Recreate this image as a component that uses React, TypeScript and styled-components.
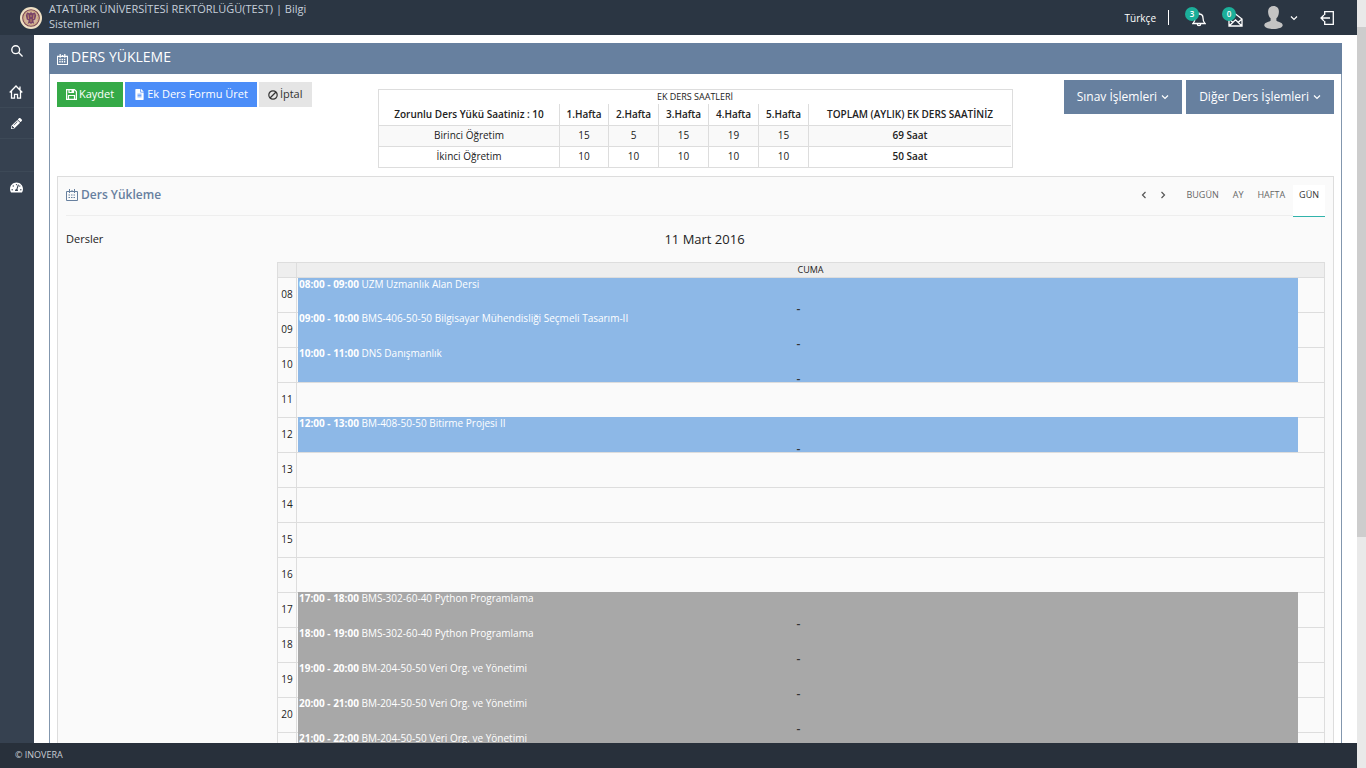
import React from "react";
import styled, { createGlobalStyle } from "styled-components";
import { FaFileAlt, FaPencilAlt, FaTachometerAlt } from "react-icons/fa";

const GlobalStyle = createGlobalStyle`
  *, *::before, *::after { box-sizing: border-box; }
  body {
    margin: 0;
    background: #fff;
    color: #222;
    font-family: "Open Sans", "Noto Sans", sans-serif;
    font-size: 10px;
  }
  button { font-family: inherit; border: 0; margin: 0; padding: 0; background: none; cursor: pointer; }
  a { color: inherit; text-decoration: none; }
  svg { display: block; flex: none; }
`;

const Window = styled.div`
  display: flex;
  height: 100vh;
  overflow: hidden;
`;

const Page = styled.div`
  flex: 1;
  min-width: 0;
  display: flex;
  flex-direction: column;
`;

const ScrollTrack = styled.div`
  width: 9px;
  padding-top: 27px;
  background: #e9e9e9;
`;

const ScrollThumb = styled.div`
  height: 510px;
  background: #cdcdcd;
`;

const TopBar = styled.header`
  flex: none;
  height: 35px;
  display: flex;
  align-items: center;
  justify-content: space-between;
  padding: 0 23px 0 20px;
  background: #2b3643;
`;

const Brand = styled.a`
  display: flex;
  align-items: center;
  gap: 7px;
`;

const BrandName = styled.span`
  width: 270px;
  padding-bottom: 4px;
  color: #c6cfda;
  font-size: 11px;
  line-height: 15px;
`;

const TopTools = styled.nav`
  display: flex;
  align-items: center;
`;

const Language = styled.button`
  height: 15px;
  padding-right: 12px;
  border-right: 1px solid #fff;
  color: #fff;
  font-size: 10px;
  line-height: 14px;
`;

const Notice = styled.button`
  position: relative;
  margin-left: 18px;
  width: 19px;
  height: 19px;
  display: flex;
  align-items: flex-end;
  justify-content: flex-end;
`;

const Count = styled.span`
  position: absolute;
  left: -2px;
  top: -1px;
  width: 14px;
  height: 14px;
  border-radius: 50%;
  background: #1caf9a;
  color: #fff;
  font-size: 8px;
  font-weight: 600;
  line-height: 13px;
  text-align: center;
`;

const Account = styled.button`
  display: flex;
  align-items: center;
  gap: 7px;
  margin-left: 21px;
  color: #fff;
`;

const Exit = styled.a`
  margin-left: 22px;
`;

const Body = styled.div`
  flex: 1;
  min-height: 0;
  display: flex;
`;

const SideBar = styled.nav`
  flex: none;
  width: 34px;
  background: #364150;
`;

const SideLink = styled.a<{ $height: number; $line?: boolean }>`
  display: flex;
  align-items: center;
  justify-content: center;
  height: ${(p) => p.$height}px;
  padding-right: 2px;
  border-bottom: ${(p) => (p.$line ? "1px solid #3d4957" : "0")};
  color: #fff;
`;

const SideSearch = styled(SideLink)`
  margin-bottom: 10px;
  padding-right: 0;
`;

const Main = styled.main`
  flex: 1;
  min-width: 0;
  overflow: hidden;
  padding: 8px 15px 0;
`;

const Portlet = styled.section`
  background: #fff;
`;

const PortletTitle = styled.h1`
  display: flex;
  align-items: center;
  gap: 3px;
  height: 31px;
  margin: 0;
  padding: 0 8px 4px;
  background: #67809f;
  color: #fff;
  font-size: 14px;
  font-weight: 400;
  line-height: 20px;

  svg { margin-top: 6px; }
`;

const PortletBody = styled.div`
  padding: 6px 7px;
  border: 1px solid #8397ae;
  border-top: 0;
`;

const ActionRow = styled.div`
  display: grid;
  grid-template-columns: 1fr auto 1fr;
  align-items: start;
`;

const Actions = styled.div`
  display: flex;
  gap: 2px;
  padding-top: 2px;
`;

const tones = {
  green: { bg: "#35aa47", fg: "#fff" },
  blue: { bg: "#4b8df8", fg: "#fff" },
  plain: { bg: "#e5e5e5", fg: "#333" },
};

const ActionButton = styled.button<{ $tone: keyof typeof tones }>`
  display: flex;
  align-items: center;
  gap: 2px;
  height: 25px;
  padding: 0 9px 2px;
  background: ${(p) => tones[p.$tone].bg};
  color: ${(p) => tones[p.$tone].fg};
  font-size: 11px;
  line-height: 15px;

  svg { margin-top: 2px; }
`;

const MenuGroup = styled.div`
  display: flex;
  justify-content: flex-end;
  gap: 4px;
`;

const MenuButton = styled.button`
  display: flex;
  align-items: center;
  gap: 4px;
  height: 34px;
  padding: 0 13px;
  background: #67809f;
  color: #fff;
  font-size: 12px;
  line-height: 18px;
`;

const HoursBox = styled.div`
  margin-top: 9px;
  padding-right: 1px;
  border: 1px solid #ddd;
`;

const HoursTable = styled.table`
  border-collapse: separate;
  border-spacing: 0;
  table-layout: fixed;
  width: 632px;
  text-align: center;

  caption { font-size: 9px; line-height: 14px; }
  th, td {
    height: 21px;
    padding: 0 0 2px;
    font-size: 10px;
    line-height: 18px;
    font-weight: 400;
    border-left: 1px solid #ddd;
  }
  th:first-child { border-left: 0; }
  thead th { font-weight: 600; }
  tbody th, tbody td { border-top: 1px solid #ddd; }
  tbody tr:first-child { background: #f9f9f9; }
  td:last-child { font-weight: 600; }
`;

const CalendarBox = styled.section`
  margin-top: 8px;
  padding: 8px;
  border: 1px solid #ddd;
  background: #fafafa;
`;

const CalendarHead = styled.div`
  display: flex;
  justify-content: space-between;
  height: 31px;
  border-bottom: 1px solid #eee;
`;

const CalendarTitle = styled.h2`
  display: flex;
  align-items: center;
  gap: 3px;
  height: 20px;
  margin: 0;
  color: #67809f;
  font-size: 12px;
  font-weight: 600;
  line-height: 18px;
`;

const ViewTabs = styled.div`
  display: flex;
  gap: 2px;
  height: 32px;
`;

const ViewTab = styled.button<{ $active?: boolean }>`
  display: flex;
  justify-content: center;
  padding: 3px 6px 0;
  color: ${(p) => (p.$active ? "#333" : "#666")};
  background: ${(p) => (p.$active ? "#fff" : "transparent")};
  border-bottom: ${(p) => (p.$active ? "1px solid #31b3ab" : "0")};
  font-size: 9px;
  line-height: 14px;
`;

const Stepper = styled.div`
  display: flex;
  gap: 9px;
  padding: 5px 9px 0 0;

  button { width: 10px; height: 10px; color: #555; }
`;

const DateRow = styled.div`
  display: grid;
  grid-template-columns: 1fr auto 1fr;
  align-items: center;
  height: 46px;
`;

const LessonsLabel = styled.h3`
  margin: 0;
  font-size: 11px;
  font-weight: 400;
  line-height: 16px;
`;

const DateTitle = styled.h2`
  margin: 0;
  padding-left: 18px;
  font-size: 13px;
  font-weight: 400;
  line-height: 18px;
`;

const CalendarGrid = styled.div`
  margin-left: 211px;
`;

const DayTable = styled.table`
  width: 100%;
  border-collapse: separate;
  border-spacing: 0;
  table-layout: fixed;
  border: 1px solid #ddd;
  border-bottom: 0;

  th, td { padding: 0; font-weight: 400; vertical-align: top; }
  thead th { height: 14px; background: #eee; font-size: 9px; line-height: 13px; }
  th:first-child, thead td:first-child { border-right: 1px solid #ddd; }
  thead td { background: #eee; }
  tbody th, tbody td { height: 35px; border-top: 1px solid #ddd; }
  tbody th { padding-bottom: 2px; vertical-align: middle; font-size: 10px; line-height: 14px; }
`;

const Event = styled.a<{ $evening: boolean; $first: boolean }>`
  display: flex;
  flex-direction: column;
  justify-content: space-between;
  height: ${(p) => (p.$first ? 34 : 35)}px;
  margin: ${(p) => (p.$first ? 0 : -1)}px 26px 0 1px;
  padding-left: 1px;
  background: ${(p) => (p.$evening ? "#a8a8a8" : "#8db8e7")};
  color: #fff;
  font-size: 10px;
  line-height: 12px;
`;

const Dash = styled.span`
  height: 10px;
  color: #333;
  font-size: 12px;
  font-weight: 600;
  line-height: 14px;
  text-align: center;
`;

const Footer = styled.footer`
  flex: none;
  height: 25px;
  padding: 0 15px;
  background: #28303b;
  color: #c8ccd2;
  font-size: 9px;
  line-height: 24px;
`;

const CalendarIcon = ({ size, bold }: { size: number; bold?: boolean }) => (
  <svg width={size} height={size} viewBox="0 0 12 12" fill="none" stroke="currentColor" aria-hidden="true">
    <path d="M.5 2.500h11v9H.5zM3.500 0v4M8.500 0v4M6 1v2" strokeWidth={bold ? 1.3 : 1} />
    <path d="M2.500 6h7M2.500 8.500h7" strokeDasharray="1.500 1" strokeWidth={bold ? 1.5 : 1} />
  </svg>
);

const SaveIcon = () => (
  <svg width="11" height="11" viewBox="0 0 11 11" fill="none" stroke="currentColor" aria-hidden="true">
    <path d="M.6.600h7.800l2 2v7.800H.6zM2.500 10.500v-4h6v4M3 .5v3h4.500v-3" strokeWidth="1.200" />
    <path d="M5.500 1h1.500v2H5.500z" fill="currentColor" stroke="none" />
  </svg>
);

const BanIcon = () => (
  <svg width="10" height="10" viewBox="0 0 10 10" fill="none" stroke="currentColor" strokeWidth="1.200" aria-hidden="true">
    <circle cx="5" cy="5" r="4.200" />
    <path d="M2 8l6-6" />
  </svg>
);

const Chevron = ({ dir = "down" }: { dir?: "down" | "left" | "right" }) => {
  const d = { down: "M1 2.500l3 3 3-3", left: "M5.500 1l-3 3 3 3", right: "M2.500 1l3 3-3 3" }[dir];
  return (
    <svg width="8" height="8" viewBox="0 0 8 8" fill="none" stroke="currentColor" strokeWidth="1.200" aria-hidden="true">
      <path d={d} />
    </svg>
  );
};

const Emblem = () => (
  <svg width="22" height="22" viewBox="0 0 22 22" aria-hidden="true">
    <circle cx="11" cy="11" r="11" fill="#efe0c4" />
    <circle cx="11" cy="11" r="8.300" fill="#d3b49c" stroke="#7b4552" strokeWidth="1.100" />
    <circle cx="11" cy="11" r="6.900" fill="none" stroke="#c9a05c" strokeWidth=".9" strokeDasharray="1 1" />
    <path d="M11 4.500l1 1.700L15 5.500l1.200 3-1 4-1.900 1 .9 3.300-2-.8-1.200 1-1.200-1-2 .8.900-3.300-1.900-1-1-4 1.200-3 3 .7z" fill="#7a4468" />
    <path d="M8 7.500l.6 4.500M14 7.500l-.6 4.500M11 8v2M11 12v3" stroke="#cfa068" strokeWidth=".8" />
  </svg>
);

const HomeIcon = () => (
  <svg width="14" height="14" viewBox="0 0 14 14" fill="none" stroke="currentColor" strokeWidth="1.300" aria-hidden="true">
    <path d="M.7 7.500L7 1l6.300 6.500M2.500 6v7.200h3V9.300h3v3.900h3V6M11 1.500v3" />
  </svg>
);

const SearchIcon = () => (
  <svg width="12" height="12" viewBox="0 0 12 12" fill="none" stroke="currentColor" strokeWidth="1.400" aria-hidden="true">
    <circle cx="4.700" cy="4.700" r="3.900" />
    <path d="M7.600 7.600l4 3.900" />
  </svg>
);

const BellIcon = () => (
  <svg width="14" height="15" viewBox="0 0 14 15" fill="none" stroke="#fff" strokeWidth="1.300" aria-hidden="true">
    <path d="M1 11.500c2-1.800 2-3 2-5.500C3 3.500 4.500 2 7 2s4 1.500 4 4c0 2.500 0 3.700 2 5.500zM7 2V.5M5.300 12c0 2.200 3.400 2.200 3.400 0" />
  </svg>
);

const MailIcon = () => (
  <svg width="15" height="14" viewBox="0 0 15 14" fill="none" stroke="#fff" strokeWidth="1.300" aria-hidden="true">
    <path d="M1 6L7.500 1 14 6v7H1zM10.300 9.300L14 6M4.700 9.300L1 6M1.300 12.700L7.500 6.800l6.200 5.900" />
  </svg>
);

const PersonIcon = () => (
  <svg width="19" height="23" viewBox="0 0 19 23" fill="#c3c3c3" aria-hidden="true">
    <path d="M9.500 0c3.600 0 5.600 2.500 5.400 6-.1 2.900-1 5-2.500 6.300v2.500c.7 1 6.300 1.300 6.300 4.500 0 2.200-4.100 3.700-9.200 3.700S.3 21.500.3 19.300c0-3.200 5.600-3.500 6.300-4.500v-2.500C5.100 11 4.200 8.900 4.100 6 3.900 2.500 5.900 0 9.500 0z" />
  </svg>
);

const ExitIcon = () => (
  <svg width="14" height="14" viewBox="0 0 14 14" fill="none" stroke="#fff" strokeWidth="1.300" aria-hidden="true">
    <path d="M4.700 4V.7h8.600v12.600H4.700V10M10 7H1M4 4L1 7l3 3" />
  </svg>
);

const weeks = ["1.Hafta", "2.Hafta", "3.Hafta", "4.Hafta", "5.Hafta"];
const hourRows = [
  { name: "Birinci Öğretim", values: [15, 5, 15, 19, 15], total: "69 Saat" },
  { name: "İkinci Öğretim", values: [10, 10, 10, 10, 10], total: "50 Saat" },
];

const lessons: Record<string, { time: string; name: string }> = {
  "08": { time: "08:00 - 09:00", name: "UZM Uzmanlık Alan Dersi" },
  "09": { time: "09:00 - 10:00", name: "BMS-406-50-50 Bilgisayar Mühendisliği Seçmeli Tasarım-II" },
  "10": { time: "10:00 - 11:00", name: "DNS Danışmanlık" },
  "12": { time: "12:00 - 13:00", name: "BM-408-50-50 Bitirme Projesi II" },
  "17": { time: "17:00 - 18:00", name: "BMS-302-60-40 Python Programlama" },
  "18": { time: "18:00 - 19:00", name: "BMS-302-60-40 Python Programlama" },
  "19": { time: "19:00 - 20:00", name: "BM-204-50-50 Veri Org. ve Yönetimi" },
  "20": { time: "20:00 - 21:00", name: "BM-204-50-50 Veri Org. ve Yönetimi" },
  "21": { time: "21:00 - 22:00", name: "BM-204-50-50 Veri Org. ve Yönetimi" },
};
const hours = Array.from({ length: 14 }, (_, i) => String(i + 8).padStart(2, "0"));

export default function App() {
  return (
    <Window>
      <GlobalStyle />
      <Page>
        <TopBar>
          <Brand href="#">
            <Emblem />
            <BrandName>ATATÜRK ÜNİVERSİTESİ REKTÖRLÜĞÜ(TEST) | Bilgi Sistemleri</BrandName>
          </Brand>
          <TopTools>
            <Language>Türkçe</Language>
            <Notice aria-label="Bildirimler"><BellIcon /><Count>3</Count></Notice>
            <Notice aria-label="Mesajlar"><MailIcon /><Count>0</Count></Notice>
            <Account aria-label="Hesap"><PersonIcon /><Chevron /></Account>
            <Exit href="#" aria-label="Çıkış"><ExitIcon /></Exit>
          </TopTools>
        </TopBar>
        <Body>
          <SideBar>
            <SideSearch href="#" $height={32} aria-label="Ara"><SearchIcon /></SideSearch>
            <SideLink href="#" $height={31} $line aria-label="Ana sayfa"><HomeIcon /></SideLink>
            <SideLink href="#" $height={31} $line aria-label="Düzenle"><FaPencilAlt size={11} /></SideLink>
            <SideLink href="#" $height={33} $line aria-label="Menü" />
            <SideLink href="#" $height={31} aria-label="Panel"><FaTachometerAlt size={13} /></SideLink>
          </SideBar>
          <Main>
            <Portlet>
              <PortletTitle><CalendarIcon size={11} bold />DERS YÜKLEME</PortletTitle>
              <PortletBody>
                <ActionRow>
                  <Actions>
                    <ActionButton $tone="green"><SaveIcon />Kaydet</ActionButton>
                    <ActionButton $tone="blue"><FaFileAlt size={11} />Ek Ders Formu Üret</ActionButton>
                    <ActionButton $tone="plain"><BanIcon />İptal</ActionButton>
                  </Actions>
                  <HoursBox>
                    <HoursTable>
                      <caption>EK DERS SAATLERİ</caption>
                      <colgroup>
                        <col width="180" />
                        {weeks.map((w, i) => <col key={w} width={i === 0 ? 49 : 50} />)}
                        <col />
                      </colgroup>
                      <thead>
                        <tr>
                          <th scope="col">Zorunlu Ders Yükü Saatiniz : 10</th>
                          {weeks.map((w) => <th scope="col" key={w}>{w}</th>)}
                          <th scope="col">TOPLAM (AYLIK) EK DERS SAATİNİZ</th>
                        </tr>
                      </thead>
                      <tbody>
                        {hourRows.map((r) => (
                          <tr key={r.name}>
                            <th scope="row">{r.name}</th>
                            {r.values.map((v, i) => <td key={i}>{v}</td>)}
                            <td>{r.total}</td>
                          </tr>
                        ))}
                      </tbody>
                    </HoursTable>
                  </HoursBox>
                  <MenuGroup>
                    <MenuButton>Sınav İşlemleri<Chevron /></MenuButton>
                    <MenuButton>Diğer Ders İşlemleri<Chevron /></MenuButton>
                  </MenuGroup>
                </ActionRow>
                <CalendarBox>
                  <CalendarHead>
                    <CalendarTitle><CalendarIcon size={12} />Ders Yükleme</CalendarTitle>
                    <ViewTabs>
                      <Stepper>
                        <button aria-label="Önceki"><Chevron dir="left" /></button>
                        <button aria-label="Sonraki"><Chevron dir="right" /></button>
                      </Stepper>
                      <ViewTab>BUGÜN</ViewTab>
                      <ViewTab>AY</ViewTab>
                      <ViewTab>HAFTA</ViewTab>
                      <ViewTab $active>GÜN</ViewTab>
                    </ViewTabs>
                  </CalendarHead>
                  <DateRow>
                    <LessonsLabel>Dersler</LessonsLabel>
                    <DateTitle>11 Mart 2016</DateTitle>
                  </DateRow>
                  <CalendarGrid>
                    <DayTable>
                      <colgroup><col width="19" /><col /></colgroup>
                      <thead>
                        <tr><td /><th scope="col">CUMA</th></tr>
                      </thead>
                      <tbody>
                        {hours.map((h) => {
                          const lesson = lessons[h];
                          return (
                            <tr key={h}>
                              <th scope="row">{h}</th>
                              <td>
                                {lesson && (
                                  <Event href="#" $evening={Number(h) >= 17} $first={h === "08"}>
                                    <span><b>{lesson.time}</b> {lesson.name}</span>
                                    <Dash>-</Dash>
                                  </Event>
                                )}
                              </td>
                            </tr>
                          );
                        })}
                      </tbody>
                    </DayTable>
                  </CalendarGrid>
                </CalendarBox>
              </PortletBody>
            </Portlet>
          </Main>
        </Body>
        <Footer>© INOVERA</Footer>
      </Page>
      <ScrollTrack><ScrollThumb /></ScrollTrack>
    </Window>
  );
}
